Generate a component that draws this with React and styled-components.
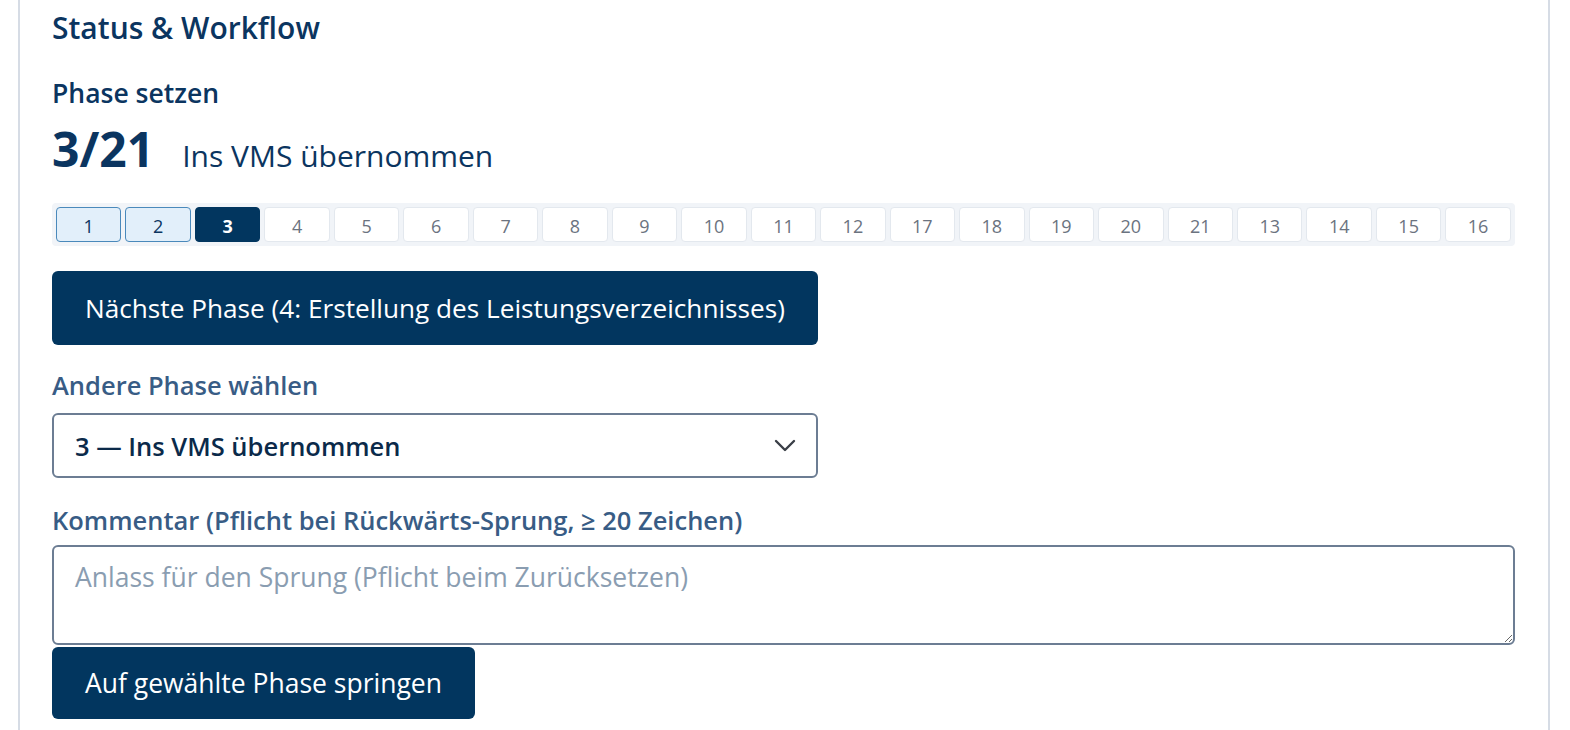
import React from "react";
import styled, { createGlobalStyle } from "styled-components";

const GlobalStyle = createGlobalStyle`
  html, body {
    margin: 0;
    padding: 0;
    background: #ffffff;
    font-family: "Open Sans", "Noto Sans", sans-serif;
  }
  * { box-sizing: border-box; }
`;

const Panel = styled.section`
  margin-left: 18px;
  width: 1532px;
  min-height: 730px;
  border-left: 2px solid #d6dce5;
  border-right: 2px solid #d6dce5;
  padding: 9px 33px 0 32px;
  display: flex;
  flex-direction: column;
  align-items: flex-start;
`;

const Title = styled.h2`
  margin: 0;
  font-size: 30px;
  line-height: 38px;
  font-weight: 600;
  color: #0b3560;
`;

const SubTitle = styled.h3`
  margin: 29px 0 0;
  font-size: 26.5px;
  line-height: 34px;
  font-weight: 600;
  color: #0b3560;
`;

const CurrentRow = styled.div`
  margin-top: 11px;
  display: flex;
  align-items: baseline;
  gap: 28px;
  height: 56px;
  line-height: 56px;
  color: #0b3560;
`;

const CurrentNumber = styled.span`
  font-size: 48px;
  font-weight: 700;
`;

const CurrentName = styled.span`
  font-size: 30px;
  font-weight: 400;
`;

const Strip = styled.div`
  margin-top: 26px;
  align-self: stretch;
  display: flex;
  gap: 4px;
  padding: 4px;
  background: #f1f4f8;
  border-radius: 4px;
`;

const Step = styled.div`
  flex: 1;
  height: 35px;
  padding-top: 2px;
  display: flex;
  align-items: center;
  justify-content: center;
  border-radius: 4px;
  font-size: 18px;
  border: 1.5px solid
    ${(p) => (p.$state === "done" ? "#4a89bb" : p.$state === "current" ? "#02365f" : "#e3e8ee")};
  background: ${(p) =>
    p.$state === "done" ? "#e2effa" : p.$state === "current" ? "#02365f" : "#ffffff"};
  color: ${(p) =>
    p.$state === "done" ? "#0b3560" : p.$state === "current" ? "#ffffff" : "#6b7380"};
  font-weight: ${(p) => (p.$state === "current" ? 700 : 400)};
`;

const PrimaryButton = styled.button`
  margin-top: ${(p) => p.$top}px;
  height: ${(p) => p.$height}px;
  padding: 0 33px;
  border: none;
  border-radius: 6px;
  background: #02365f;
  color: #ffffff;
  font-family: inherit;
  font-size: ${(p) => p.$size}px;
  font-weight: 400;
  cursor: pointer;
`;

const FieldLabel = styled.label`
  display: block;
  margin-top: ${(p) => p.$top}px;
  font-size: 25.5px;
  line-height: 32px;
  font-weight: 600;
  color: #385c85;
`;

const SelectBox = styled.div`
  margin-top: 12px;
  width: 766px;
  height: 65px;
  border: 2px solid #6c7d93;
  border-radius: 6px;
  display: flex;
  align-items: center;
  justify-content: space-between;
  padding: 0 20px 0 21px;
  font-size: 25.5px;
  font-weight: 600;
  color: #0b2a4a;
`;

const TextArea = styled.textarea`
  display: block;
  margin-top: 9px;
  align-self: stretch;
  height: 100px;
  border: 2px solid #6c7d93;
  border-radius: 6px;
  padding: 12px 21px;
  font-family: inherit;
  font-size: 26.5px;
  color: #0b2a4a;
  resize: vertical;
  &::placeholder {
    color: #8a9db1;
  }
`;

const phases = [1, 2, 3, 4, 5, 6, 7, 8, 9, 10, 11, 12, 17, 18, 19, 20, 21, 13, 14, 15, 16];

function Chevron() {
  return (
    <svg width="22" height="14" viewBox="0 0 22 14" fill="none">
      <path d="M2 2 L11 11 L20 2" stroke="#3a3f47" strokeWidth="2.4" strokeLinecap="round" strokeLinejoin="round" />
    </svg>
  );
}

export default function App() {
  return (
    <>
      <GlobalStyle />
      <Panel>
        <Title>Status &amp; Workflow</Title>
        <SubTitle>Phase setzen</SubTitle>
        <CurrentRow>
          <CurrentNumber>3/21</CurrentNumber>
          <CurrentName>Ins VMS übernommen</CurrentName>
        </CurrentRow>
        <Strip>
          {phases.map((n, i) => (
            <Step key={n} $state={i < 2 ? "done" : i === 2 ? "current" : "open"}>
              {n}
            </Step>
          ))}
        </Strip>
        <PrimaryButton $top={25} $height={74} $size={26.2}>
          Nächste Phase (4: Erstellung des Leistungsverzeichnisses)
        </PrimaryButton>
        <FieldLabel $top={24}>Andere Phase wählen</FieldLabel>
        <SelectBox>
          <span>3 — Ins VMS übernommen</span>
          <Chevron />
        </SelectBox>
        <FieldLabel $top={26}>Kommentar (Pflicht bei Rückwärts-Sprung, ≥ 20 Zeichen)</FieldLabel>
        <TextArea placeholder="Anlass für den Sprung (Pflicht beim Zurücksetzen)" />
        <PrimaryButton $top={2} $height={72} $size={26.5}>
          Auf gewählte Phase springen
        </PrimaryButton>
      </Panel>
    </>
  );
}
